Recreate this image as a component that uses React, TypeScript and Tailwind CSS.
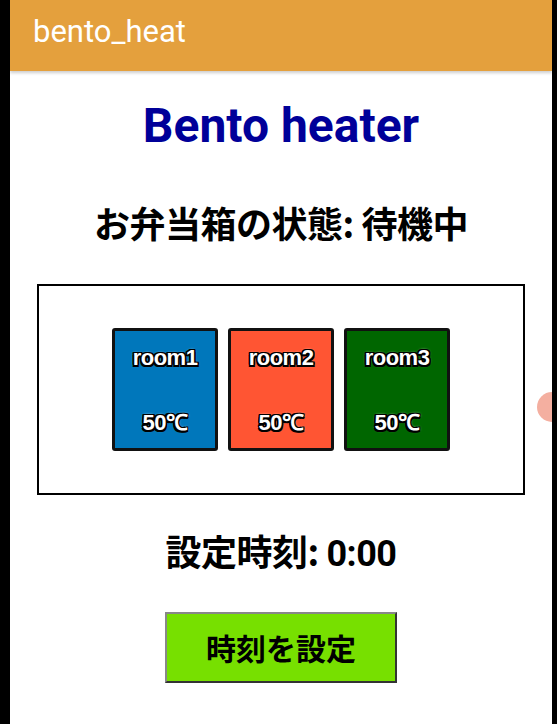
import React from "react";

const rooms = [
  { name: "room1", temp: "50℃", bg: "bg-[#0077BB]" },
  { name: "room2", temp: "50℃", bg: "bg-[#FF5533]" },
  { name: "room3", temp: "50℃", bg: "bg-[#006600]" },
];

const outline =
  "[text-shadow:-1.5px_-1.5px_0_#000,1.5px_-1.5px_0_#000,-1.5px_1.5px_0_#000,1.5px_1.5px_0_#000,0_-1.5px_0_#000,0_1.5px_0_#000,-1.5px_0_0_#000,1.5px_0_0_#000,0_0_3px_#fff]";

export default function App() {
  return (
    <div className="w-[557px] h-[724px] bg-black flex overflow-hidden">
      <div className="ml-[10px] w-[542px] h-full bg-white flex flex-col items-center relative overflow-hidden [font-family:Roboto,'Noto_Sans_CJK_JP',sans-serif]">
        <div className="w-full h-[71px] bg-[#E4A03D] flex items-center pl-[23px] pb-[8px] shadow-[0_2px_3px_rgba(0,0,0,0.2)] shrink-0">
          <span className="text-white text-[31px] leading-none">bento_heat</span>
        </div>
        <h1 className="mt-[27px] text-[48px] leading-[56px] font-bold text-[#000099]">Bento heater</h1>
        <h2 className="mt-[46px] text-[36px] leading-[44px] font-bold text-black [font-family:'Noto_Sans_CJK_JP',sans-serif] tracking-[-0.5px]">
          お弁当箱の状態: 待機中
        </h2>
        <div className="mt-[40px] w-[488px] h-[211px] border-2 border-black flex items-center justify-center gap-[10px]">
          {rooms.map((r) => (
            <div
              key={r.name}
              className={`${r.bg} w-[106px] h-[123px] border-[3px] border-[#111] rounded-[3px] flex flex-col items-center pt-[14px] pb-[12px] justify-between text-white text-[22px] font-bold leading-[26px] tracking-[-0.5px] [font-family:'Liberation_Sans',Arial,sans-serif] ${outline}`}
            >
              <span>{r.name}</span>
              <span>{r.temp}</span>
            </div>
          ))}
        </div>
        <div className="mt-[33px] text-[36px] leading-[44px] font-bold text-black [font-family:'Noto_Sans_CJK_JP',sans-serif] tracking-[-0.5px]">
          設定時刻: <span className="[font-family:Roboto,sans-serif]">0:00</span>
        </div>
        <button className="mt-[36px] w-[232px] h-[71px] bg-[#77E000] border-2 border-t-[#888] border-l-[#888] border-r-[#333] border-b-[#333] flex items-center justify-center text-[30px] font-bold text-black [font-family:'Noto_Sans_CJK_JP',sans-serif]">
          時刻を設定
        </button>
        <div className="absolute left-[527px] top-[392px] w-[30px] h-[30px] rounded-full bg-[#F4AFA0]" />
      </div>
    </div>
  );
}
